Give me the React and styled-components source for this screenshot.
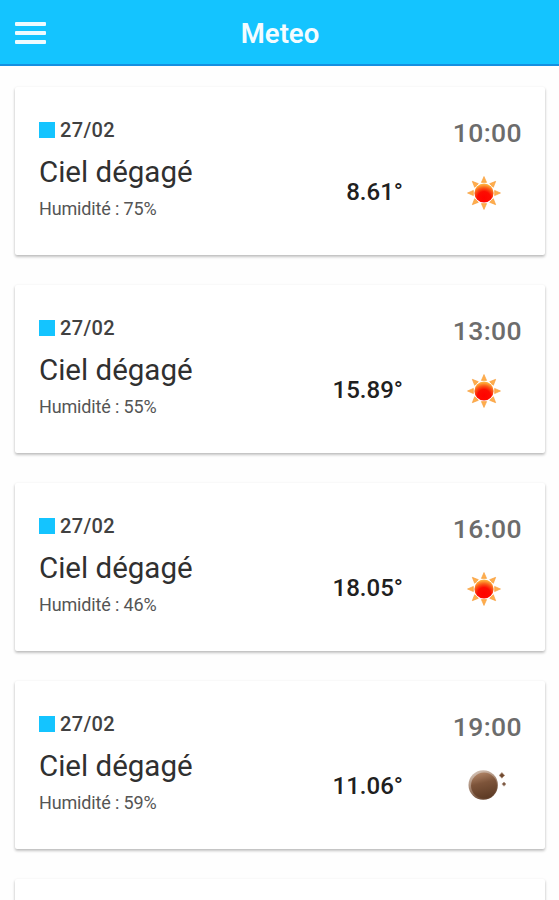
import React from 'react';
import styled, { createGlobalStyle } from 'styled-components';

const GlobalStyle = createGlobalStyle`
  * { box-sizing: border-box; }
  body {
    margin: 0;
    background: #fefefe;
    font-family: Roboto, "Liberation Sans", sans-serif;
    overflow: hidden;
  }
`;

const Page = styled.div`
  height: 900px;
  overflow: hidden;
`;

const Header = styled.header`
  display: grid;
  grid-template-columns: 60px 1fr 60px;
  align-items: center;
  height: 66px;
  background: #14c4ff;
  border-bottom: 2px solid #168fe0;
`;

const MenuButton = styled.button`
  display: flex;
  flex-direction: column;
  gap: 5px;
  width: 46px;
  padding: 2px 0 0 15px;
  border: 0;
  background: none;
`;

const MenuBar = styled.span`
  height: 4px;
  border-radius: 1px;
  background: #effbff;
`;

const Title = styled.h1`
  margin: 3px 0 0 1px;
  text-align: center;
  font-size: 27.5px;
  line-height: 32px;
  font-weight: 600;
  color: #f4fcff;
`;

const List = styled.main`
  display: flex;
  flex-direction: column;
  gap: 30px;
  padding: 21px 14px 0 15px;
`;

const Card = styled.article`
  display: grid;
  grid-template-columns: 1fr 121px 118px;
  flex: none;
  height: 168px;
  padding: 30px 24px 0;
  border-radius: 2px;
  background: #fff;
  box-shadow: 0 2px 3px rgba(0, 0, 0, 0.18), 0 1px 3px rgba(0, 0, 0, 0.13);
`;

const Info = styled.div`
  display: flex;
  flex-direction: column;
`;

const Day = styled.div`
  display: flex;
  align-items: center;
  gap: 5px;
  height: 26px;
  font-size: 20px;
  letter-spacing: 0.35px;
  font-weight: 500;
  color: #414141;
`;

const Square = styled.span`
  width: 16px;
  height: 16px;
  margin-top: -1px;
  background: #14c4ff;
`;

const Sky = styled.div`
  height: 40px;
  line-height: 40px;
  margin-top: 9px;
  font-size: 29.5px;
  color: #303030;
  white-space: nowrap;
`;

const Humidity = styled.div`
  height: 24px;
  line-height: 24px;
  margin-top: 5px;
  font-size: 18px;
  letter-spacing: -0.15px;
  color: #555;
  white-space: nowrap;
`;

const Temperature = styled.div`
  padding-top: 61px;
  line-height: 28px;
  text-align: right;
  font-size: 24px;
  font-weight: 500;
  color: #202020;
`;

const Side = styled.div`
  display: flex;
  flex-direction: column;
  align-items: flex-end;
`;

const Hour = styled.div`
  height: 32px;
  line-height: 32px;
  margin-right: -1px;
  font-size: 26.5px;
  letter-spacing: 0.4px;
  font-weight: 500;
  color: #6c6c6c;
`;

const Icon = styled.svg`
  width: 44px;
  height: 44px;
  margin: 22px 15px 0 0;
`;

const SunIcon = () => (
  <Icon viewBox="0 0 44 44">
    <defs>
      <radialGradient id="sun" cx="50%" cy="76%" r="80%">
        <stop offset="0" stopColor="#ff0200" />
        <stop offset="0.42" stopColor="#fd0d02" />
        <stop offset="0.66" stopColor="#fa5a18" />
        <stop offset="0.85" stopColor="#ffa436" />
        <stop offset="1" stopColor="#ffc04c" />
      </radialGradient>
    </defs>
    {[0, 45, 90, 135, 180, 225, 270, 315].map((angle) => (
      <path
        key={angle}
        d="M22 5.5L24.6 11.4H19.4Z"
        fill="#ffad4c"
        stroke="#f59a34"
        strokeWidth="0.6"
        transform={`rotate(${angle} 22 22)`}
      />
    ))}
    <circle cx="22" cy="22" r="9.6" fill="url(#sun)" />
  </Icon>
);

const MoonIcon = () => (
  <Icon viewBox="0 0 44 44">
    <defs>
      <linearGradient id="moon" x1="0.35" y1="0" x2="0.6" y2="1">
        <stop offset="0" stopColor="#b08466" />
        <stop offset="0.4" stopColor="#7d543a" />
        <stop offset="1" stopColor="#5c3a24" />
      </linearGradient>
      <linearGradient id="moonRim" x1="0.2" y1="0" x2="0.6" y2="1">
        <stop offset="0" stopColor="#d9c8bb" />
        <stop offset="0.5" stopColor="#a38470" />
        <stop offset="1" stopColor="#63412c" />
      </linearGradient>
    </defs>
    <circle cx="21.2" cy="20" r="14.7" fill="url(#moonRim)" />
    <circle cx="22" cy="20.6" r="13" fill="url(#moon)" />
    <path d="M39.9 7.6l1.3 1.5 1.5 1.3-1.5 1.3-1.3 1.5-1.3-1.5-1.5-1.3 1.5-1.3z" fill="#70492f" stroke="#a98b76" strokeWidth="0.7" />
    <path d="M42 17l1 1.1 1.1 1-1.1 1-1 1.1-1-1.1-1.1-1 1.1-1z" fill="#7d5b45" stroke="#b39a8a" strokeWidth="0.7" />
  </Icon>
);

const forecasts = [
  { day: '27/02', hour: '10:00', sky: 'Ciel dégagé', humidity: 75, temp: '8.61' },
  { day: '27/02', hour: '13:00', sky: 'Ciel dégagé', humidity: 55, temp: '15.89' },
  { day: '27/02', hour: '16:00', sky: 'Ciel dégagé', humidity: 46, temp: '18.05' },
  { day: '27/02', hour: '19:00', sky: 'Ciel dégagé', humidity: 59, temp: '11.06', night: true },
];

const ForecastCard = ({ day, hour, sky, humidity, temp, night }) => (
  <Card>
    <Info>
      <Day><Square />{day}</Day>
      <Sky>{sky}</Sky>
      <Humidity>Humidité : {humidity}%</Humidity>
    </Info>
    <Temperature>{temp}°</Temperature>
    <Side>
      <Hour>{hour}</Hour>
      {night ? <MoonIcon /> : <SunIcon />}
    </Side>
  </Card>
);

export default function App() {
  return (
    <Page>
      <GlobalStyle />
      <Header>
        <MenuButton aria-label="Menu">
          <MenuBar />
          <MenuBar />
          <MenuBar />
        </MenuButton>
        <Title>Meteo</Title>
      </Header>
      <List>
        {forecasts.map((item) => (
          <ForecastCard key={item.hour} {...item} />
        ))}
        <Card />
      </List>
    </Page>
  );
}
